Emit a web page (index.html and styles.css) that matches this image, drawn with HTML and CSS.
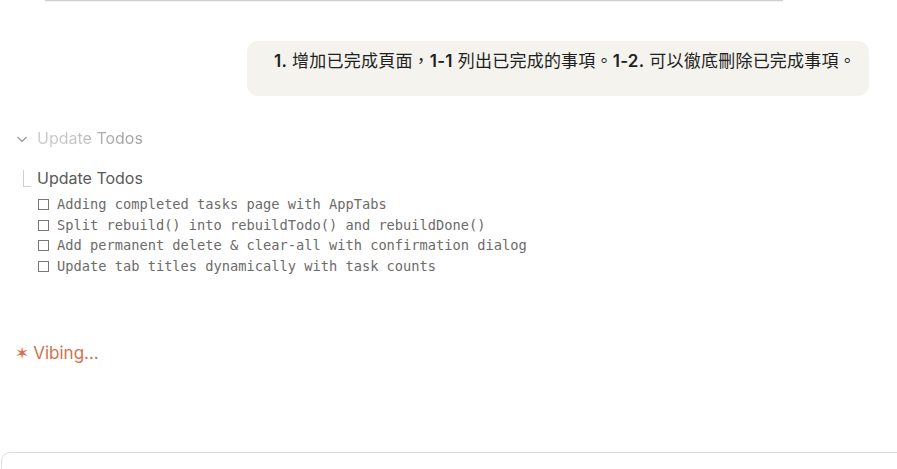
FILE: index.html
```html
<!DOCTYPE html>
<html lang="zh-Hant">
<head>
<meta charset="utf-8">
<link rel="stylesheet" href="styles.css">
</head>
<body>
<div class="page">
  <div class="top-edge"></div>
  <div class="user-row">
    <div class="bubble"><b>1.</b> 增加已完成頁面，<b>1-1</b> 列出已完成的事項。<b>1-2.</b> 可以徹底刪除已完成事項。</div>
  </div>
  <div class="tool">
    <div class="tool-head">
      <svg class="chev" width="12" height="12" viewBox="0 0 12 12"><path d="M1.5 4 L6 8.5 L10.5 4" fill="none" stroke="#8f8f8f" stroke-width="1.1"/></svg>
      <span class="tool-title">Update Todos</span>
    </div>
    <div class="tool-body">
      <div class="branch"></div>
      <div class="tool-content">
        <div class="sub-title">Update Todos</div>
        <ul class="todos">
          <li><span class="box"></span><span>Adding completed tasks page with AppTabs</span></li>
          <li><span class="box"></span><span>Split rebuild() into rebuildTodo() and rebuildDone()</span></li>
          <li><span class="box"></span><span>Add permanent delete &amp; clear-all with confirmation dialog</span></li>
          <li><span class="box"></span><span>Update tab titles dynamically with task counts</span></li>
        </ul>
      </div>
    </div>
  </div>
  <div class="status"><span class="star">✶</span><span>Vibing…</span></div>
  <div class="input-box"></div>
</div>
</body>
</html>
```
FILE: styles.css
```css
html, body {
  margin: 0;
  padding: 0;
  background: #ffffff;
  overflow: hidden;
}
.page {
  width: 897px;
  height: 469px;
  position: relative;
  overflow: hidden;
  font-family: Inter, "Noto Sans CJK TC", sans-serif;
}
.top-edge {
  margin-left: 45px;
  width: 738px;
  height: 1px;
  background: #cfcfcf;
  box-shadow: 0 1px 1px rgba(0,0,0,0.06);
}
.user-row {
  display: flex;
  justify-content: flex-end;
  padding-right: 28px;
  margin-top: 40px;
}
.bubble {
  width: 622px;
  box-sizing: border-box;
  height: 55px;
  background: #f4f3ed;
  border-radius: 11px;
  padding: 8px 10px 0 27px;
  font-size: 17px;
  line-height: 24px;
  letter-spacing: 0.22px;
  color: #1f1f1f;
  white-space: nowrap;
}
.bubble b {
  font-weight: 600;
}
.tool {
  margin-top: 31px;
  padding-left: 16px;
}
.tool-head {
  display: flex;
  align-items: center;
  height: 22px;
}
.chev {
  margin-right: 9px;
  margin-top: 1px;
}
.tool-title {
  font-size: 16px;
  background: linear-gradient(90deg, #cacaca 0px, #c4c4c4 40px, #aaaaaa 70px, #a0a0a0 104px);
  -webkit-background-clip: text;
  background-clip: text;
  color: transparent;
}
.tool-body {
  display: flex;
  margin-top: 18px;
}
.branch {
  width: 7px;
  height: 16px;
  margin-left: 7px;
  margin-top: 3px;
  border-left: 1px solid #cfcfcf;
  border-bottom: 1px solid #cfcfcf;
  flex: none;
}
.tool-content {
  margin-left: 6px;
}
.sub-title {
  font-size: 16px;
  line-height: 22px;
  color: #5a5a5a;
}
.todos {
  list-style: none;
  margin: 5px 0 0 0;
  padding: 0;
  font-family: "DejaVu Sans Mono", monospace;
  font-size: 13.7px;
  line-height: 20.7px;
  color: #6d6b69;
}
.todos li {
  display: flex;
  align-items: center;
  white-space: pre;
}
.box {
  width: 9px;
  height: 9px;
  border: 1px solid #777;
  margin-left: 1px;
  margin-right: 8px;
  flex: none;
}
.status {
  margin-top: 64px;
  padding-left: 15px;
  font-size: 17px;
  color: #d4714e;
  line-height: 24px;
}
.star {
  font-family: "DejaVu Sans", sans-serif;
  font-size: 17px;
  margin-right: 4px;
}
.input-box {
  position: absolute;
  left: 1px;
  top: 452px;
  width: 920px;
  height: 60px;
  border: 1px solid #dcdcdc;
  border-radius: 9px;
}
```
